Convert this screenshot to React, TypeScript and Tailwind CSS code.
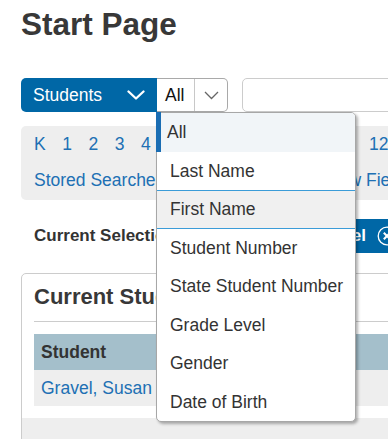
import React from "react";

const pages = ["K", "1", "2", "3", "4", "5", "6", "7", "8", "9", "10", "11", "12"];
const fields = [
  "All",
  "Last Name",
  "First Name",
  "Student Number",
  "State Student Number",
  "Grade Level",
  "Gender",
  "Date of Birth",
];

const App = () => {
  return (
    <div className="relative w-[388px] h-[439px] overflow-hidden bg-white font-['Liberation_Sans',Arial,sans-serif] text-[#333]">
      <div className="pl-[21px] w-[560px]">
        <h1 className="mt-[6px] text-[31.5px] leading-[36px] font-bold text-[#383838]">Start Page</h1>

        {/* search toolbar */}
        <div className="mt-[36px] flex items-center h-[34px]">
          <button className="flex items-center justify-between w-[136px] h-[34px] pl-[12px] pr-[12px] bg-[#0067a6] rounded-l-[5px] text-white text-[17.5px]">
            <span>Students</span>
            <svg width="18" height="10" viewBox="0 0 18 10" fill="none">
              <path d="M1.5 1.5 L9 8.5 L16.5 1.5" stroke="white" strokeWidth="2.3" strokeLinecap="round" strokeLinejoin="round" />
            </svg>
          </button>
          <div className="relative flex h-[34px] w-[71px] border border-l-0 border-[#a9a9a9] rounded-r-[5px] bg-white">
            <div className="flex items-center w-[37px] pl-[8px] text-[17.5px] text-[#111]">All</div>
            <div className="flex items-center justify-center flex-1 border-l border-[#c8c8c8]">
              <svg width="15" height="9" viewBox="0 0 15 9" fill="none">
                <path d="M1 1 L7.5 7.5 L14 1" stroke="#666" strokeWidth="1.3" />
              </svg>
            </div>

            {/* open dropdown */}
            <div className="absolute left-[-1px] top-[calc(100%+1px)] z-10 w-[200px] bg-white border border-[#a7a7a7] rounded-[5px] shadow-[2px_2px_3px_rgba(0,0,0,0.3)]">
              {fields.map((f, i) => {
                if (i === 0) {
                  return (
                    <div key={f} className="relative flex items-center h-[38.5px] pl-[10px] bg-[#f1f5f8] text-[17.5px] text-[#333] rounded-t-[4px]">
                      <span className="absolute left-[-1px] top-[-1px] bottom-0 w-[5px] bg-[#1a6db3]" />
                      {f}
                    </div>
                  );
                }
                if (f === "First Name") {
                  return (
                    <div key={f} className="flex items-center h-[38.5px] pl-[13px] bg-[#f0f0f0] border-y border-[#3b9cd8] text-[17.5px] text-[#333]">
                      {f}
                    </div>
                  );
                }
                return (
                  <div key={f} className="flex items-center h-[38.5px] pl-[13px] text-[17.5px] text-[#333]">
                    {f}
                  </div>
                );
              })}
            </div>
          </div>
          <div className="ml-[14px] h-[34px] w-[260px] border border-[#cccccc] rounded-[5px]" />
        </div>

        {/* grade / search links */}
        <div className="mt-[14px] pl-[13px] pb-[2px] bg-[#eeeeee] rounded-[5px] text-[17.5px] text-[#2070b4]">
          <div className="flex items-center h-[36px] gap-[16.5px]">
            {pages.map((p) => (
              <span key={p}>{p}</span>
            ))}
          </div>
          <div className="flex items-center h-[36px]">
            <span>Stored Searches</span>
            <span className="ml-[12px]">Stored Selections</span>
            <span className="ml-[10px]">View Field List</span>
          </div>
        </div>

        {/* current selection */}
        <div className="mt-[19px] w-[386px] h-[34px] flex items-center justify-between">
          <span className="pl-[13px] text-[17px] font-bold text-[#333]">Current Selection (1)</span>
          <button className="flex items-center h-[34px] pl-[12px] pr-[10px] bg-[#0067a6] rounded-[4px] text-white text-[17px] font-bold">
            <span>Cancel</span>
            <svg className="ml-[11px]" width="20" height="20" viewBox="0 0 20 20" fill="none">
              <circle cx="10" cy="10" r="8.8" stroke="white" strokeWidth="1.3" />
              <path d="M6.8 6.8 L13.2 13.2 M13.2 6.8 L6.8 13.2" stroke="white" strokeWidth="2" />
            </svg>
          </button>
        </div>

        {/* current students card */}
        <div className="mt-[20px] border border-[#cccccc] rounded-[5px] h-[200px]">
          <div className="px-[12px]">
            <h2 className="mt-[8px] text-[22px] leading-[30px] font-bold text-[#383838]">Current Students</h2>
            <div className="mt-[9px] border-b border-[#cccccc]" />
            <div className="mt-[12px]">
              <div className="flex items-center h-[36px] pl-[7px] bg-[#a4bfcb] text-[17.5px] font-bold text-[#333]">Student</div>
              <div className="flex items-center h-[36px] pl-[7px] bg-[#eeeeee] text-[17.5px] text-[#2070b4]">Gravel, Susan</div>
            </div>
          </div>
          <div className="mt-[12px] h-[60px] bg-[#eeeeee]" />
        </div>
      </div>
    </div>
  );
};

export default App;
